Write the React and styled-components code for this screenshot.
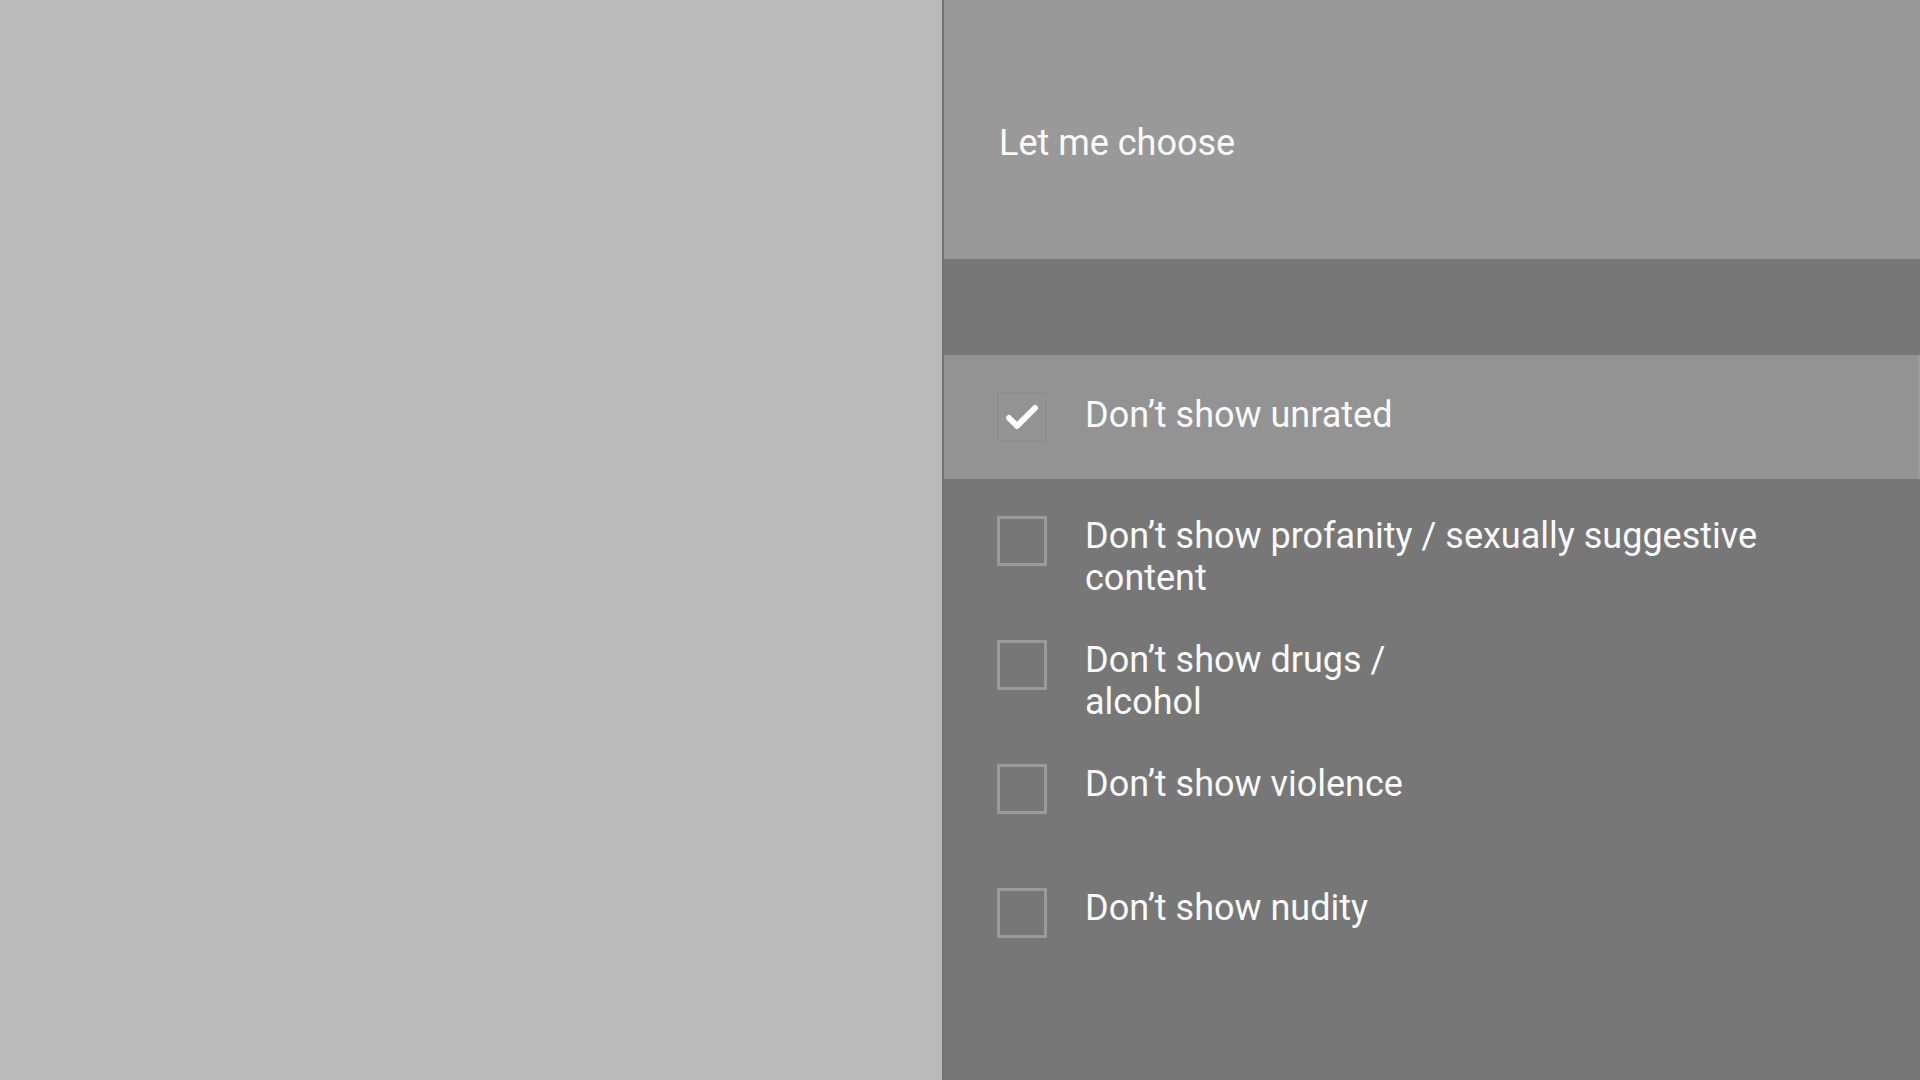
import React from "react"
import styled, { createGlobalStyle } from "styled-components"

const GlobalStyle = createGlobalStyle`
  html, body {
    margin: 0;
    padding: 0;
    width: 1920px;
    height: 1080px;
    overflow: hidden;
  }
  body {
    font-family: Roboto, "Liberation Sans", sans-serif;
  }
`

const Screen = styled.div`
  display: flex;
  width: 1920px;
  height: 1080px;
`

const Backdrop = styled.div`
  width: 942px;
  flex-shrink: 0;
  background: #bababa;
  border-right: 2px solid #727272;
`

const Panel = styled.div`
  flex: 1;
  display: flex;
  flex-direction: column;
  background: #777777;
`

const Header = styled.div`
  height: 259px;
  box-sizing: border-box;
  padding: 121px 0 0 55px;
  background: #999999;
  color: #fafafa;
  font-size: 36px;
  line-height: 44px;
`

const Spacer = styled.div`
  height: 96px;
`

const Row = styled.label`
  display: flex;
  align-items: flex-start;
  height: 124px;
  box-sizing: border-box;
  padding: 37px 0 0 53px;
  background: ${(p) => (p.$active ? "#939393" : "transparent")};
  box-shadow: ${(p) => (p.$active ? "inset -2px 0 0 #9c9c9c" : "none")};
`

const Box = styled.span`
  width: 50px;
  height: 50px;
  box-sizing: border-box;
  flex-shrink: 0;
  border: ${(p) => (p.$checked ? "2px solid #8f8f8f" : "3px solid #9a9a9a")};
  display: flex;
  align-items: center;
  justify-content: center;
`

const Label = styled.span`
  margin-left: 38px;
  margin-top: ${(p) => (p.$active ? "2px" : "-1px")};
  max-width: ${(p) => p.$max || 720}px;
  color: #fafafa;
  font-size: 36px;
  line-height: 42px;
`

const options = [
  { text: "Don’t show unrated", checked: true },
  { text: "Don’t show profanity / sexually suggestive content" },
  { text: "Don’t show drugs / alcohol", max: 360 },
  { text: "Don’t show violence" },
  { text: "Don’t show nudity" },
]

function Check() {
  return (
    <svg width="36" height="36" viewBox="0 0 36 36">
      <polyline
        points="5,19 13,27 31,9"
        fill="none"
        stroke="#ffffff"
        strokeWidth="6"
        strokeLinecap="round"
        strokeLinejoin="round"
      />
    </svg>
  )
}

export default function App() {
  return (
    <>
      <GlobalStyle />
      <Screen>
        <Backdrop />
        <Panel>
          <Header>Let me choose</Header>
          <Spacer />
          {options.map((o) => (
            <Row key={o.text} $active={o.checked}>
              <Box $checked={o.checked}>{o.checked && <Check />}</Box>
              <Label $active={o.checked} $max={o.max}>
                {o.text}
              </Label>
            </Row>
          ))}
        </Panel>
      </Screen>
    </>
  )
}
